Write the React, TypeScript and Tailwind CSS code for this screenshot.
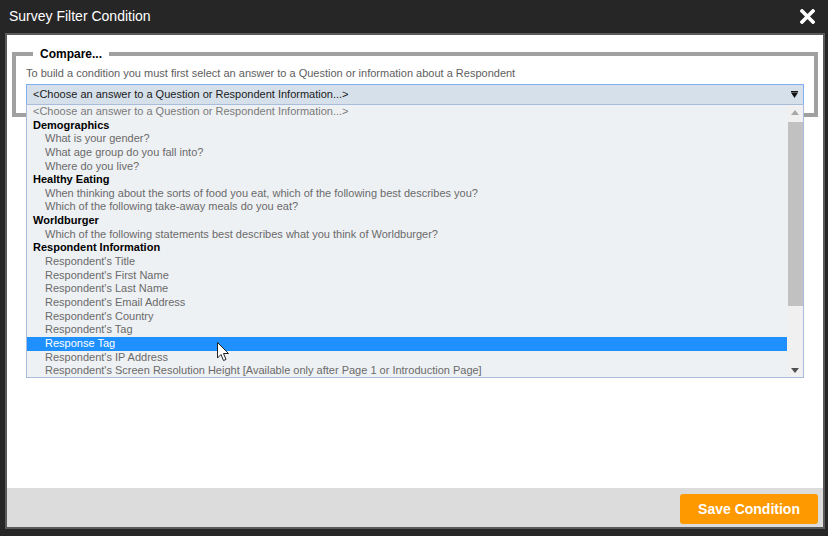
type Row = { label: string; kind: "placeholder" | "group" | "item"; selected?: boolean };

const rows: Row[] = [
  { label: "<Choose an answer to a Question or Respondent Information...>", kind: "placeholder" },
  { label: "Demographics", kind: "group" },
  { label: "What is your gender?", kind: "item" },
  { label: "What age group do you fall into?", kind: "item" },
  { label: "Where do you live?", kind: "item" },
  { label: "Healthy Eating", kind: "group" },
  { label: "When thinking about the sorts of food you eat, which of the following best describes you?", kind: "item" },
  { label: "Which of the following take-away meals do you eat?", kind: "item" },
  { label: "Worldburger", kind: "group" },
  { label: "Which of the following statements best describes what you think of Worldburger?", kind: "item" },
  { label: "Respondent Information", kind: "group" },
  { label: "Respondent's Title", kind: "item" },
  { label: "Respondent's First Name", kind: "item" },
  { label: "Respondent's Last Name", kind: "item" },
  { label: "Respondent's Email Address", kind: "item" },
  { label: "Respondent's Country", kind: "item" },
  { label: "Respondent's Tag", kind: "item" },
  { label: "Response Tag", kind: "item", selected: true },
  { label: "Respondent's IP Address", kind: "item" },
  { label: "Respondent's Screen Resolution Height [Available only after Page 1 or Introduction Page]", kind: "item" },
];

function OptionRow({ row }: { row: Row }) {
  if (row.kind === "group") {
    return <div className="h-[13.65px] pl-[6px] text-[11px] font-bold leading-[13.65px] text-black">{row.label}</div>;
  }
  const color = row.selected ? "bg-[#1e90ff] text-white" : row.kind === "placeholder" ? "text-[#7a7a7a]" : "text-[#6a6a6a]";
  return (
    <div
      className={`h-[13.65px] whitespace-nowrap text-[11px] leading-[13.65px] ${row.kind === "placeholder" ? "pl-[6px]" : "pl-[18px]"} ${color}`}
    >
      {row.label}
    </div>
  );
}

export default function App() {
  return (
    <div className="relative flex h-[536px] w-[828px] flex-col bg-[#262626] font-['Liberation_Sans',Arial,sans-serif]">
      <div className="flex h-[33px] shrink-0 items-center justify-between pl-[9px] pr-[13px] text-[14px] text-white">
        <span>Survey Filter Condition</span>
        <svg width="15" height="15" viewBox="0 0 15 15">
          <path d="M2 2 L13 13 M13 2 L2 13" stroke="white" strokeWidth="3.6" strokeLinecap="square" />
        </svg>
      </div>

      <div className="mb-[7px] ml-[5px] mr-[3px] flex flex-1 flex-col border-2 border-[#5a5a5a]">
        <div className="flex-1 bg-white px-[5px] pt-[12px]">
          <fieldset className="relative border-4 border-[#a0a0a0] px-[10px] pb-[8px]">
            <legend className="ml-[7px] px-[7px] text-[12px] font-bold leading-[14px] text-black">Compare...</legend>
            <p className="mt-[5px] text-[11px] leading-[14px] text-[#5e5e5e]">
              To build a condition you must first select an answer to a Question or information about a Respondent
            </p>
            <div className="relative mt-[4px]">
              <div className="flex h-[21px] items-center justify-between border border-[#82aff0] bg-[#d6e0ea] pl-[6px] pr-[5px] text-[11px] text-[#1a1a1a]">
                <span>&lt;Choose an answer to a Question or Respondent Information...&gt;</span>
                <svg width="7" height="7" viewBox="0 0 7 7">
                  <rect x="0" y="0" width="7" height="1.2" fill="#111" />
                  <path d="M0 1.5 H7 L3.5 7 Z" fill="#111" />
                </svg>
              </div>

              <div className="absolute left-0 right-0 top-[20px] z-10 flex h-[274px] border border-[#a9bcdc] bg-[#eef1f4]">
                <div className="min-w-0 flex-1 overflow-hidden">
                  {rows.map((row) => (
                    <OptionRow key={row.label} row={row} />
                  ))}
                </div>
                <div className="relative w-[16px] shrink-0 bg-[#f0f0f0]">
                  <svg className="absolute left-[4px] top-[5px]" width="8" height="5" viewBox="0 0 8 5">
                    <path d="M0 5 L4 0 L8 5 Z" fill="#a8a8a8" />
                  </svg>
                  <div className="absolute left-[1px] right-0 top-[17px] h-[184px] bg-[#c1c1c1]" />
                  <svg className="absolute bottom-[4px] left-[4px]" width="8" height="5" viewBox="0 0 8 5">
                    <path d="M0 0 L8 0 L4 5 Z" fill="#505050" />
                  </svg>
                </div>
              </div>
            </div>
          </fieldset>
        </div>

        <div className="flex h-[39px] shrink-0 items-end justify-end bg-[#dcdcdc] pb-[3px] pr-[5px]">
          <button className="h-[30px] w-[138px] rounded-[3px] bg-[#ff9900] text-[14px] font-bold text-white">
            Save Condition
          </button>
        </div>
      </div>

      <svg className="absolute left-[217px] top-[342px] z-20" width="13" height="20" viewBox="0 0 13 20">
        <path d="M0.5 0.5 V16 L4 12.5 L6.5 18.5 L9 17.5 L6.5 11.5 H11.5 Z" fill="white" stroke="#222" strokeWidth="1" />
      </svg>
    </div>
  );
}
